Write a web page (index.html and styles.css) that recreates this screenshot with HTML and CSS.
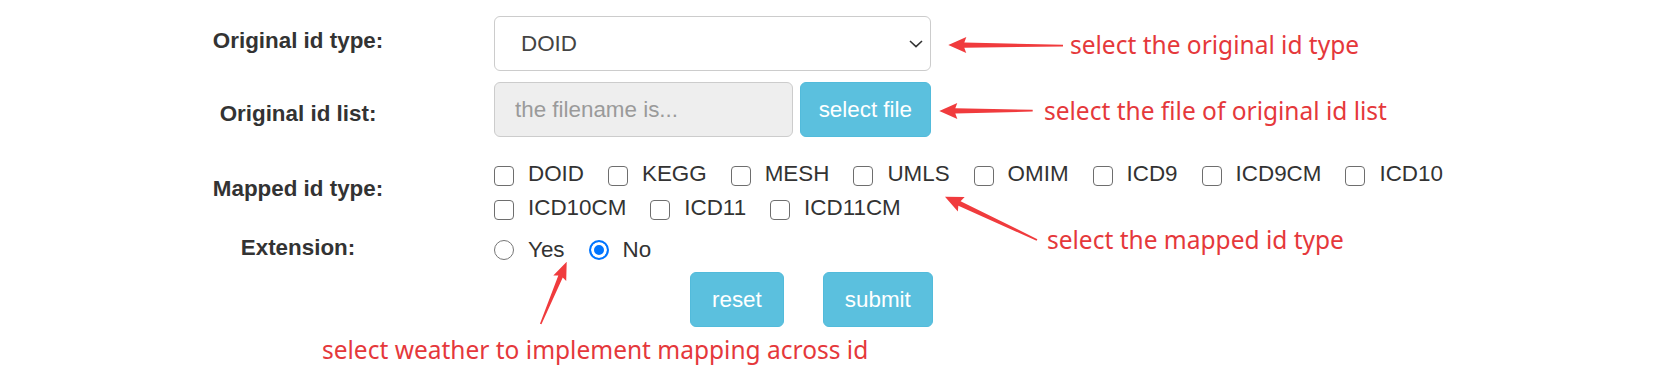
FILE: index.html
```html
<!DOCTYPE html>
<html lang="en">
<head>
    <meta charset="utf-8"/>
    <title>Disease id mapping</title>
    <link rel="stylesheet" href="styles.css">
</head>
<body>
    <div class="page">
        <form class="form">
            <div class="row">
                <label class="label label-up">Original id type:</label>
                <div class="control">
                    <div class="select-wrap">
                        <select class="select">
                            <option>DOID</option>
                            <option>KEGG</option>
                            <option>MESH</option>
                            <option>UMLS</option>
                            <option>OMIM</option>
                            <option>ICD9</option>
                            <option>ICD9CM</option>
                            <option>ICD10</option>
                            <option>ICD10CM</option>
                            <option>ICD11</option>
                            <option>ICD11CM</option>
                        </select>
                        <svg class="chevron" width="14" height="8" viewBox="0 0 14 8">
                            <path d="M1 1l6 5.6L13 1" fill="none" stroke="#333" stroke-width="1.6"/>
                        </svg>
                    </div>
                </div>
            </div>
            <div class="row row-file">
                <label class="label label-down">Original id list:</label>
                <div class="control file-group">
                    <input class="file-name" type="text" placeholder="the filename is..." readonly>
                    <button type="button" class="btn">select file</button>
                </div>
            </div>
            <div class="row row-checks">
                <label class="label label-up">Mapped id type:</label>
                <div class="control checks">
                    <label class="check"><input type="checkbox">DOID</label>
                    <label class="check"><input type="checkbox">KEGG</label>
                    <label class="check"><input type="checkbox">MESH</label>
                    <label class="check"><input type="checkbox">UMLS</label>
                    <label class="check"><input type="checkbox">OMIM</label>
                    <label class="check"><input type="checkbox">ICD9</label>
                    <label class="check"><input type="checkbox">ICD9CM</label>
                    <label class="check"><input type="checkbox">ICD10</label>
                    <label class="check"><input type="checkbox">ICD10CM</label>
                    <label class="check"><input type="checkbox">ICD11</label>
                    <label class="check"><input type="checkbox">ICD11CM</label>
                </div>
            </div>
            <div class="row row-radios">
                <label class="label label-up-small">Extension:</label>
                <div class="control checks">
                    <label class="check"><input type="radio" name="extension">Yes</label>
                    <label class="check"><input type="radio" name="extension" checked>No</label>
                </div>
            </div>
            <div class="row row-actions">
                <span class="label"></span>
                <div class="control actions">
                    <button type="reset" class="btn btn-wide">reset</button>
                    <button type="button" class="btn btn-wide">submit</button>
                </div>
            </div>
        </form>

        <!-- annotations drawn over the form -->
        <svg class="arrows" width="1669" height="374" viewBox="0 0 1669 374">
            <g fill="#f03b3d">
                <polygon transform="translate(1063 45.7) rotate(180.35)" points="0,-0.9 98.7,-2.6 96.7,-8 114.7,0 96.7,8 98.7,2.6 0,0.9"/>
                <polygon transform="translate(1032.7 110.7) rotate(179.8)" points="0,-0.9 77.4,-2.6 75.4,-8 93.4,0 75.4,8 77.4,2.6 0,0.9"/>
                <polygon transform="translate(1037 240) rotate(205.2)" points="0,-0.9 85.7,-2.6 83.7,-8 101.7,0 83.7,8 85.7,2.6 0,0.9"/>
                <polygon transform="translate(540.7 324) rotate(-67.35)" points="0,-0.8 51.5,-2.4 49.5,-7 67.5,0 49.5,7 51.5,2.4 0,0.8"/>
            </g>
        </svg>
        <div class="note note-type">select the original id type</div>
        <div class="note note-file">select the file of original id list</div>
        <div class="note note-mapped">select the mapped id type</div>
        <div class="note note-ext">select weather to implement mapping across id</div>
    </div>
</body>
</html>
```

FILE: styles.css
```css
body {
    margin: 0;
    font-family: "Liberation Sans", Arial, sans-serif;
    color: #333;
    background-color: #fff;
}
.page {
    position: relative;
    width: 1669px;
    height: 374px;
    overflow: hidden;
}
.form {
    padding: 16px 0 0 178px;
}
.row {
    display: flex;
    align-items: center;
}
.row-file {
    margin-top: 11px;
}
.row-checks {
    margin-top: 20px;
}
.row-radios {
    margin-top: 7px;
}
.row-actions {
    margin-top: 5px;
}
.label {
    flex: none;
    width: 240px;
    text-align: center;
    font-weight: bold;
    font-size: 22.4px;
    line-height: 32px;
}
.label-up {
    padding-bottom: 5px;
}
.label-up-small {
    padding-bottom: 3px;
}
.label-down {
    padding-top: 9px;
}
.control {
    margin-left: 76px;
}
.select-wrap {
    position: relative;
    width: 437px;
}
.select {
    appearance: none;
    -webkit-appearance: none;
    display: block;
    width: 100%;
    height: 55px;
    box-sizing: border-box;
    padding: 0 40px 0 26px;
    border: 1px solid #ccc;
    border-radius: 6px;
    background-color: #fff;
    font-family: inherit;
    font-size: 22.4px;
    color: #444;
    outline: none;
}
.chevron {
    position: absolute;
    right: 8px;
    top: 24px;
    pointer-events: none;
}
.file-group {
    display: flex;
    gap: 7px;
    width: 437px;
}
.file-name {
    flex: 1;
    min-width: 0;
    height: 55px;
    box-sizing: border-box;
    padding: 0 20px;
    border: 1px solid #ccc;
    border-radius: 6px;
    background-color: #eee;
    font-family: inherit;
    font-size: 22.4px;
    color: #555;
    outline: none;
}
.file-name::placeholder {
    color: #9a9a9a;
}
.btn {
    height: 55px;
    box-sizing: border-box;
    padding: 0 18px;
    border: 1px solid #52bbdb;
    border-radius: 6px;
    background-color: #5bc0de;
    color: #fff;
    font-family: inherit;
    font-size: 22.4px;
    cursor: pointer;
}
.btn-wide {
    padding: 0 21px;
}
.checks {
    display: flex;
    flex-wrap: wrap;
    column-gap: 24px;
    width: 1000px;
}
.check {
    display: flex;
    align-items: center;
    height: 34px;
    font-size: 22.4px;
    color: #333;
}
.check input {
    appearance: none;
    -webkit-appearance: none;
    flex: none;
    width: 20px;
    height: 20px;
    box-sizing: border-box;
    margin: 0 14px 0 0;
    border: 1.5px solid #6e6e6e;
    background-color: #fff;
}
.check input[type="checkbox"] {
    border-radius: 4px;
    margin-top: 3px;
}
.check input[type="radio"] {
    border-radius: 50%;
    border-color: #767676;
}
.check input[type="radio"]:checked {
    border: 2px solid #0075ff;
    background-color: #0075ff;
    box-shadow: inset 0 0 0 3px #fff;
}
.actions {
    display: flex;
    gap: 39px;
    margin-left: 272px;
}
.arrows {
    position: absolute;
    top: 0;
    left: 0;
    pointer-events: none;
}
.note {
    position: absolute;
    font-family: "Noto Sans", sans-serif;
    font-size: 24.5px;
    line-height: 30px;
    color: #e5383b;
    white-space: nowrap;
}
.note-type {
    left: 1070px;
    top: 30px;
}
.note-file {
    left: 1044px;
    top: 96px;
}
.note-mapped {
    left: 1047px;
    top: 225px;
}
.note-ext {
    left: 322px;
    top: 335px;
}
```
